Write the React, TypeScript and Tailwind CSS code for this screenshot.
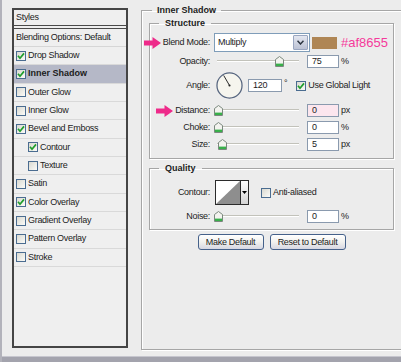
import React from "react";

function Check({ checked }: { checked?: boolean }) {
  return (
    <span className="flex h-[10px] w-[10px] shrink-0 items-center justify-center border border-[#4a6c90] bg-gradient-to-br from-[#d9d9d1] to-[#fbfbf8]">
      {checked && (
        <svg width="8" height="8" viewBox="0 0 8 8" className="block">
          <path d="M1 3.8 L3 6.2 L7 1.4" fill="none" stroke="#1f9e2c" strokeWidth="1.7" />
        </svg>
      )}
    </span>
  );
}

function Arrow() {
  return (
    <svg width="17" height="12" viewBox="0 0 17 12" className="block shrink-0">
      <path d="M0 3.6 H8.5 V0 L17 6 L8.5 12 V8.4 H0 Z" fill="#ee2a8a" />
    </svg>
  );
}

function Thumb({ left }: { left: number }) {
  return (
    <svg
      width="9"
      height="11"
      viewBox="0 0 9 11"
      className="absolute top-[1px] block"
      style={{ left: left - 4.5 }}
    >
      <path d="M0.5 3.5 L4.5 0.5 L8.5 3.5 L8.5 10.5 L0.5 10.5 Z" fill="#f3f3ef" stroke="#7b887e" />
      <rect x="1" y="7.6" width="7" height="2.4" fill="#38b04a" />
    </svg>
  );
}

function Slider({ pos }: { pos: number }) {
  return (
    <div className="relative ml-[7px] h-[13px] w-[82px] shrink-0">
      <div className="absolute left-0 right-0 top-[5px] h-[2px] border-b border-white bg-[#c2c2ba]" />
      <Thumb left={pos} />
    </div>
  );
}

function Field({ value, pink, w = 32, ml = 8 }: { value: string; pink?: boolean; w?: number; ml?: number }) {
  return (
    <div
      className={`flex h-[13px] shrink-0 items-center border border-[#8a9aae] pl-[4px] leading-[11px] ${
        pink ? "bg-[#fce6ee]" : "bg-white"
      }`}
      style={{ width: w, marginLeft: ml }}
    >
      {value}
    </div>
  );
}

function Label({ text, arrow }: { text: string; arrow?: boolean }) {
  return (
    <div className="flex w-[60px] shrink-0 items-center justify-end gap-[2px] whitespace-nowrap">
      {arrow && <Arrow />}
      <span>{text}</span>
    </div>
  );
}

const items = [
  { label: "Drop Shadow", checked: true },
  { label: "Inner Shadow", checked: true, selected: true },
  { label: "Outer Glow" },
  { label: "Inner Glow" },
  { label: "Bevel and Emboss", checked: true },
  { label: "Contour", checked: true, indent: true },
  { label: "Texture", indent: true },
  { label: "Satin" },
  { label: "Color Overlay", checked: true },
  { label: "Gradient Overlay" },
  { label: "Pattern Overlay" },
  { label: "Stroke" },
];

export default function App() {
  return (
    <div className="flex h-[362px] w-[401px] flex-col overflow-hidden border-l-2 border-[#b2b2ba] bg-[#ececec] font-['Liberation_Sans',Arial,sans-serif] text-[9px] leading-[11px] tracking-[-0.3px] text-[#1c1c1c]">
      <div className="flex flex-1 items-start pl-[10px] pt-[4px]">
        {/* Left styles list */}
        <div className="mt-[4px] flex h-[340px] w-[116px] shrink-0 flex-col border-2 border-[#454545] bg-[#efefef]">
          <div className="flex h-[16px] items-center border-b border-[#4a4a4a] pl-[2px]">Styles</div>
          <div className="mt-[2px] flex h-[19px] items-center border-y border-t-[#4a4a4a] border-b-[#d6d6d6] pl-[2px]">
            Blending Options: Default
          </div>
          {items.map((it) => (
            <div
              key={it.label}
              className={`flex h-[18.33px] shrink-0 items-center gap-[2px] border-b border-[#d9d9d9] ${
                it.indent ? "pl-[14px]" : "pl-[2px]"
              } ${it.selected ? "bg-[#b5b8c7] font-bold tracking-normal" : ""}`}
            >
              <Check checked={it.checked} />
              <span>{it.label}</span>
            </div>
          ))}
        </div>

        {/* Right panel */}
        <fieldset className="ml-[13px] h-[346px] w-[263px] min-w-0 shrink-0 border border-[#a6a6a6] shadow-[inset_1px_1px_0_#fff,1px_1px_0_#fff]">
          <legend className="ml-[10px] px-[5px] text-[9px] font-bold leading-[12px] tracking-normal">Inner Shadow</legend>
          <div className="flex flex-col pl-[7px] pr-[9px] pt-[2px]">
            {/* Structure */}
            <fieldset className="min-w-0 border border-[#a6a6a6] pb-[7px] shadow-[inset_1px_1px_0_#fff,1px_1px_0_#fff]">
              <legend className="ml-[9px] px-[6px] text-[9px] font-bold leading-[11px] tracking-normal">Structure</legend>
              <div className="flex flex-col pt-[4px]">
                <div className="flex h-[19px] items-center">
                  <Label text="Blend Mode:" arrow />
                  <div className="ml-[4px] flex h-[19px] w-[96px] shrink-0 items-stretch border border-[#7f9db9] bg-white">
                    <div className="flex flex-1 items-center pl-[3px]">Multiply</div>
                    <div className="m-[1px] flex w-[15px] items-center justify-center rounded-[1px] border border-[#9aa6c0] bg-gradient-to-b from-[#e4e7f0] to-[#bcc2d4]">
                      <svg width="7" height="5" viewBox="0 0 7 5" className="block">
                        <path d="M0.5 0.8 L3.5 4 L6.5 0.8" fill="none" stroke="#2c3440" strokeWidth="1.5" />
                      </svg>
                    </div>
                  </div>
                  <div className="ml-[2px] h-[12px] w-[25px] shrink-0 bg-[#af8655]" />
                  <span className="ml-[4px] text-[13px] leading-[15px] tracking-normal text-[#f53a9b]">#af8655</span>
                </div>

                <div className="mt-[3px] flex h-[13px] items-center">
                  <Label text="Opacity:" />
                  <Slider pos={62} />
                  <Field value="75" />
                  <span className="ml-[2px]">%</span>
                </div>

                <div className="mt-[4px] flex h-[27px] items-center">
                  <Label text="Angle:" />
                  <svg width="27" height="27" viewBox="0 0 28 28" className="ml-[6px] block shrink-0">
                    <circle cx="14" cy="14" r="13" fill="#f6f5ee" stroke="#56657f" strokeWidth="1.3" />
                    <line x1="14" y1="14" x2="8" y2="3.6" stroke="#222" strokeWidth="1" />
                    <circle cx="14" cy="14" r="1.1" fill="#222" />
                  </svg>
                  <Field value="120" w={34} ml={5} />
                  <span className="ml-[2px] self-start pt-[6px]">°</span>
                  <span className="ml-[9px]">
                    <Check checked />
                  </span>
                  <span className="ml-[2px] whitespace-nowrap">Use Global Light</span>
                </div>

                <div className="mt-[5px] flex h-[13px] items-center">
                  <Label text="Distance:" arrow />
                  <Slider pos={1} />
                  <Field value="0" pink />
                  <span className="ml-[2px]">px</span>
                </div>

                <div className="mt-[4px] flex h-[13px] items-center">
                  <Label text="Choke:" />
                  <Slider pos={1} />
                  <Field value="0" />
                  <span className="ml-[2px]">%</span>
                </div>

                <div className="mt-[4px] flex h-[13px] items-center">
                  <Label text="Size:" />
                  <Slider pos={5} />
                  <Field value="5" />
                  <span className="ml-[2px]">px</span>
                </div>
              </div>
            </fieldset>

            {/* Quality */}
            <fieldset className="mt-[4px] min-w-0 border border-[#a6a6a6] pb-[6px] shadow-[inset_1px_1px_0_#fff,1px_1px_0_#fff]">
              <legend className="ml-[9px] px-[6px] text-[9px] font-bold leading-[11px] tracking-normal">Quality</legend>
              <div className="flex flex-col pt-[6px]">
                <div className="flex h-[25px] items-center">
                  <Label text="Contour:" />
                  <div className="ml-[5px] flex h-[25px] w-[34px] shrink-0 border border-[#2b2b2b] bg-white">
                    <svg width="24" height="23" viewBox="0 0 24 23" className="block shrink-0">
                      <polygon points="0,23 24,0 24,23" fill="#8e8e8e" />
                    </svg>
                    <div className="flex flex-1 items-center justify-center border-l border-[#2b2b2b] bg-gradient-to-b from-white to-[#d4d4d4]">
                      <svg width="5" height="3" viewBox="0 0 5 3" className="block">
                        <polygon points="0,0 5,0 2.5,3" fill="#000" />
                      </svg>
                    </div>
                  </div>
                  <span className="ml-[12px]">
                    <Check />
                  </span>
                  <span className="ml-[2px]">Anti-aliased</span>
                </div>
                <div className="mt-[5px] flex h-[13px] items-center">
                  <Label text="Noise:" />
                  <Slider pos={1} />
                  <Field value="0" />
                  <span className="ml-[2px]">%</span>
                </div>
              </div>
            </fieldset>

            {/* Buttons */}
            <div className="mt-[4px] flex justify-center gap-[6px]">
              <button className="h-[16px] w-[66px] rounded-[3px] border border-[#45618a] bg-gradient-to-b from-white via-[#f1f1ee] to-[#d6d7e2] leading-[11px]">
                Make Default
              </button>
              <button className="h-[16px] w-[76px] rounded-[3px] border border-[#45618a] bg-gradient-to-b from-white via-[#f1f1ee] to-[#d6d7e2] leading-[11px]">
                Reset to Default
              </button>
            </div>
          </div>
        </fieldset>
      </div>
      <div className="h-[6px] shrink-0 border-t border-[#c6c6ce] bg-[#a3a3ad]" />
    </div>
  );
}
